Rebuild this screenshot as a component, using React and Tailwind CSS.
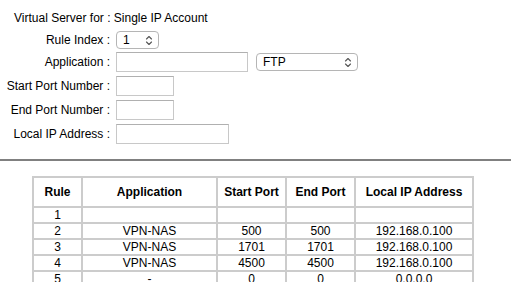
import React from "react";

function Chevron() {
  return (
    <svg width="8" height="11" viewBox="0 0 8 11" fill="none" stroke="#555" strokeWidth="1.1" strokeLinecap="round" strokeLinejoin="round">
      <path d="M1.5 4 L4 1.5 L6.5 4" />
      <path d="M1.5 7 L4 9.5 L6.5 7" />
    </svg>
  );
}

function Select({ value, w }) {
  return (
    <div className={`flex h-[18px] items-center justify-between rounded-[4px] border border-[#b5b5b5] bg-white pl-[6px] pr-[5px] text-[12px] leading-none text-black ${w}`}>
      <span>{value}</span>
      <Chevron />
    </div>
  );
}

function Input({ w }) {
  return <div className={`h-[20px] border border-[#c8c8c8] border-t-[#b0b0b0] bg-white ${w}`} />;
}

const rows = [
  ["1", "", "", "", ""],
  ["2", "VPN-NAS", "500", "500", "192.168.0.100"],
  ["3", "VPN-NAS", "1701", "1701", "192.168.0.100"],
  ["4", "VPN-NAS", "4500", "4500", "192.168.0.100"],
  ["5", "-", "0", "0", "0.0.0.0"],
];

export default function App() {
  return (
    <div className="h-[282px] w-[511px] overflow-hidden bg-white text-[12px] text-black" style={{ fontFamily: '"Liberation Sans", Arial, sans-serif' }}>
      <div className="pl-[14px] pt-[11px] leading-[14px]">Virtual Server for : Single IP Account</div>
      <div className="mt-[6px] flex flex-col">
        <div className="flex h-[18px] items-center">
          <div className="w-[110px] text-right">Rule Index :</div>
          <div className="ml-[6px]"><Select value="1" w="w-[43px]" /></div>
        </div>
        <div className="mt-[3px] flex h-[20px] items-center">
          <div className="w-[110px] text-right">Application :</div>
          <div className="ml-[6px]"><Input w="w-[132px]" /></div>
          <div className="ml-[8px]"><Select value="FTP" w="w-[102px]" /></div>
        </div>
        <div className="mt-[4px] flex h-[20px] items-center">
          <div className="w-[110px] text-right">Start Port Number :</div>
          <div className="ml-[6px]"><Input w="w-[58px]" /></div>
        </div>
        <div className="mt-[4px] flex h-[20px] items-center">
          <div className="w-[110px] text-right">End Port Number :</div>
          <div className="ml-[6px]"><Input w="w-[58px]" /></div>
        </div>
        <div className="mt-[4px] flex h-[20px] items-center">
          <div className="w-[110px] text-right">Local IP Address :</div>
          <div className="ml-[6px]"><Input w="w-[113px]" /></div>
        </div>
      </div>
      <div className="mt-[15px] h-[2px] w-full bg-[#808080]" />
      <div className="mt-[15px] pl-[32px]">
        <table className="border-collapse border-2 border-[#cccccc] text-center leading-[14px]">
          <thead>
            <tr>
              <th className="h-[30px] w-[49px] border-2 border-[#cccccc] p-0 font-bold">Rule</th>
              <th className="w-[135px] border-2 border-[#cccccc] p-0 font-bold">Application</th>
              <th className="w-[69px] border-2 border-[#cccccc] p-0 font-bold">Start Port</th>
              <th className="w-[69px] border-2 border-[#cccccc] p-0 font-bold">End Port</th>
              <th className="w-[118px] border-2 border-[#cccccc] p-0 font-bold">Local IP Address</th>
            </tr>
          </thead>
          <tbody>
            {rows.map((r) => (
              <tr key={r[0]}>
                {r.map((c, i) => (
                  <td key={i} className="h-[14px] border-2 border-[#cccccc] p-0 font-normal">{c}</td>
                ))}
              </tr>
            ))}
          </tbody>
        </table>
      </div>
    </div>
  );
}
